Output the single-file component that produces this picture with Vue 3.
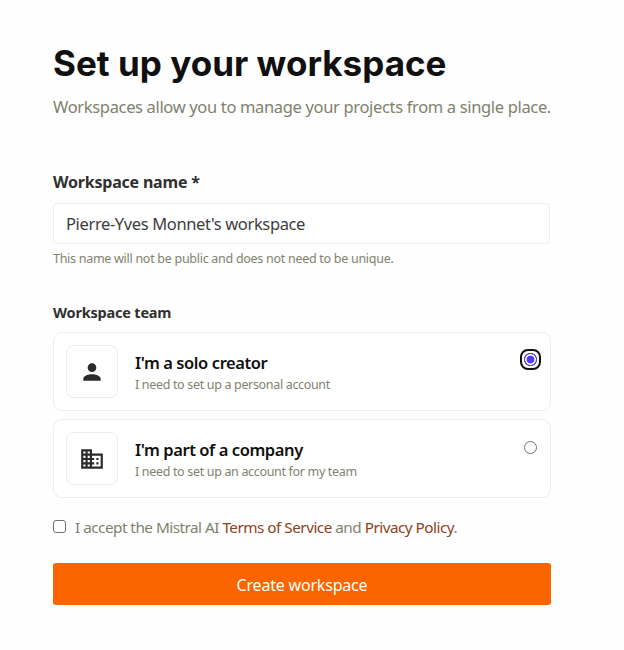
<script setup>
import { ref } from 'vue'

const name = ref("Pierre-Yves Monnet's workspace")
const team = ref('solo')
const accepted = ref(false)

const options = [
  { id: 'solo', title: "I'm a solo creator", text: 'I need to set up a personal account' },
  { id: 'company', title: "I'm part of a company", text: 'I need to set up an account for my team' },
]
</script>

<template>
  <main class="page">
    <h1>Set up your workspace</h1>
    <p class="intro">Workspaces allow you to manage your projects from a single place.</p>

    <label class="label name-label" for="ws-name">Workspace name *</label>
    <input id="ws-name" v-model="name" class="field" type="text" />
    <p class="help">This name will not be public and does not need to be unique.</p>

    <h2 class="label team-label">Workspace team</h2>
    <div class="options">
      <label v-for="o in options" :key="o.id" class="card">
        <span class="tile">
          <svg v-if="o.id === 'solo'" viewBox="0 0 24 24" width="26" height="26">
            <path d="M12 12c2.21 0 4-1.79 4-4s-1.79-4-4-4-4 1.79-4 4 1.79 4 4 4zm0 2c-2.67 0-8 1.34-8 4v2h16v-2c0-2.66-5.33-4-8-4z" />
          </svg>
          <svg v-else viewBox="0 0 24 24" width="26" height="26">
            <path d="M12 7V3H2v18h20V7H12zM6 19H4v-2h2v2zm0-4H4v-2h2v2zm0-4H4V9h2v2zm0-4H4V5h2v2zm4 12H8v-2h2v2zm0-4H8v-2h2v2zm0-4H8V9h2v2zm0-4H8V5h2v2zm10 12h-8v-2h2v-2h-2v-2h2v-2h-2V9h8v10zm-2-8h-2v2h2v-2zm0 4h-2v2h2v-2z" />
          </svg>
        </span>
        <span class="copy">
          <span class="title">{{ o.title }}</span>
          <span class="desc">{{ o.text }}</span>
        </span>
        <input v-model="team" class="radio" type="radio" name="team" :value="o.id" />
      </label>
    </div>

    <label class="terms">
      <input v-model="accepted" class="check" type="checkbox" />
      <span class="terms-text">I accept the Mistral AI <a>Terms of Service</a> and <a>Privacy Policy</a>.</span>
    </label>

    <button class="submit" type="button">Create workspace</button>
  </main>
</template>

<style>
body {
  background: #fefefe;
}
</style>

<style scoped>
.page {
  box-sizing: border-box;
  width: 551px;
  padding: 41px 0 0 53px;
  font-family: "Noto Sans", "Open Sans", sans-serif;
  color: #303030;
  white-space: nowrap;
}
h1 {
  margin: 0;
  font: 700 35px/44px Inter, sans-serif;
  letter-spacing: 0.03px;
  color: #101010;
}
.intro {
  margin: 10px 0 0;
  font-size: 16.5px;
  line-height: 24px;
  letter-spacing: -0.34px;
  color: #7f826d;
}
.label {
  display: block;
  margin: 0;
  font-weight: 700;
  line-height: 22px;
}
.name-label {
  margin-top: 52px;
  font-size: 16px;
  letter-spacing: -0.2px;
}
.team-label {
  margin-top: 32px;
  font-size: 14.5px;
  letter-spacing: -0.2px;
}
.field {
  display: block;
  box-sizing: border-box;
  width: 497px;
  height: 41px;
  margin-top: 10px;
  padding: 1px 12px;
  border: 1px solid #efefe8;
  border-radius: 4px;
  outline: none;
  background: #fff;
  font: 16.5px "Noto Sans", sans-serif;
  letter-spacing: -0.37px;
  color: #3d3d3d;
}
.help {
  margin: 5px 0 0;
  font-size: 12.5px;
  line-height: 20px;
  letter-spacing: -0.28px;
  color: #7f826d;
}
.options {
  display: grid;
  gap: 8px;
  margin-top: 9px;
}
.card {
  display: flex;
  box-sizing: border-box;
  height: 79px;
  padding: 12px 9px 12px 12px;
  border: 1px solid #ececec;
  border-radius: 9px;
  background: #fff;
}
.tile {
  display: flex;
  align-items: center;
  justify-content: center;
  box-sizing: border-box;
  width: 52px;
  height: 53px;
  border: 1px solid #ececec;
  border-radius: 8px;
}
.tile svg {
  fill: #2b2b2b;
}
.copy {
  display: flex;
  flex: 1;
  flex-direction: column;
  padding: 6px 0 0 17px;
}
.title {
  font-size: 16.5px;
  font-weight: 600;
  line-height: 24px;
  letter-spacing: -0.41px;
  color: #101010;
}
.desc {
  font-size: 12.5px;
  line-height: 19px;
  letter-spacing: -0.33px;
  color: #7f826d;
}
.radio {
  appearance: none;
  box-sizing: border-box;
  width: 13px;
  height: 13px;
  margin: 9px 4px 0 0;
  border: 1px solid #707070;
  border-radius: 50%;
  background: #fff;
}
.radio:checked {
  margin-top: 8px;
  border: 0;
  border-radius: 4px;
  background: radial-gradient(circle, #4f3cf5 3.5px, #fff 4.3px, #fff 5px, #5a45f5 5.6px, #5a45f5 6.3px, #fff 6.9px);
  outline: 2px solid #101010;
  outline-offset: 2px;
}
.terms {
  display: flex;
  align-items: center;
  height: 25px;
  margin-top: 16px;
}
.check {
  appearance: none;
  box-sizing: border-box;
  width: 13px;
  height: 13px;
  margin: 0 9px 0 0;
  border: 1px solid #707070;
  border-radius: 3px;
  background: #fff;
}
.terms-text {
  font-size: 15.3px;
  line-height: 24px;
  letter-spacing: -0.51px;
  color: #7f826d;
}
.terms-text a {
  color: #8c421a;
}
.submit {
  display: block;
  width: 100%;
  height: 42px;
  margin-top: 24px;
  padding: 2px 0 0;
  border: 0;
  border-radius: 3px;
  background: #fb6500;
  font: 16px "Noto Sans", sans-serif;
  letter-spacing: -0.2px;
  color: #fff;
}
</style>
